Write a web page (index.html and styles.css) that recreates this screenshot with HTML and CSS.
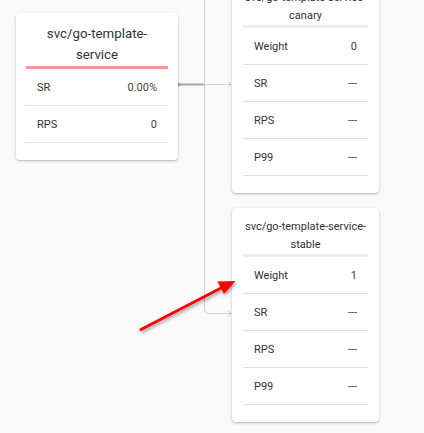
FILE: index.html
```html
<!DOCTYPE html>
<html>
<head>
<meta charset="utf-8">
<link rel="stylesheet" href="styles.css">
</head>
<body>
<div class="canvas">
  <svg class="edges" width="424" height="433" viewBox="0 0 424 433">
    <line x1="204.5" y1="0" x2="204.5" y2="309" stroke="#d0d0d0" stroke-width="1"/>
    <path d="M204.5 309 Q204.5 313.5 209 313.5 L231 313.5" fill="none" stroke="#d0d0d0" stroke-width="1"/>
    <path d="M228 310.5 L231 313.5 L228 316.5" fill="none" stroke="#c8c8c8" stroke-width="1"/>
    <line x1="204.5" y1="84.5" x2="231" y2="84.5" stroke="#d0d0d0" stroke-width="1"/>
    <path d="M228 81.5 L231 84.5 L228 87.5" fill="none" stroke="#c8c8c8" stroke-width="1"/>
    <line x1="178" y1="84.5" x2="204" y2="84.5" stroke="#a8a8a8" stroke-width="2"/>
    <circle cx="178.5" cy="84.5" r="2" fill="#a8a8a8"/>
  </svg>

  <div class="card card-src">
    <div class="title title-src">svc/go-template-service</div>
    <div class="bar bar-red"></div>
    <div class="row"><span>SR</span><span class="val">0.00%</span></div>
    <div class="row"><span>RPS</span><span class="val">0</span></div>
  </div>

  <div class="card card-canary">
    <div class="title">svc/go-template-service-canary</div>
    <div class="bar bar-gray"></div>
    <div class="row"><span>Weight</span><span class="val">0</span></div>
    <div class="row"><span>SR</span><span class="val">---</span></div>
    <div class="row"><span>RPS</span><span class="val">---</span></div>
    <div class="row"><span>P99</span><span class="val">---</span></div>
  </div>

  <div class="card card-stable">
    <div class="title">svc/go-template-service-stable</div>
    <div class="bar bar-gray"></div>
    <div class="row"><span>Weight</span><span class="val">1</span></div>
    <div class="row"><span>SR</span><span class="val">---</span></div>
    <div class="row"><span>RPS</span><span class="val">---</span></div>
    <div class="row"><span>P99</span><span class="val">---</span></div>
  </div>

  <svg class="arrow" width="424" height="433" viewBox="0 0 424 433">
    <defs>
      <filter id="sh" x="-20%" y="-20%" width="140%" height="140%">
        <feDropShadow dx="1.5" dy="2" stdDeviation="1.5" flood-color="#000" flood-opacity="0.35"/>
      </filter>
    </defs>
    <g filter="url(#sh)">
      <line x1="141" y1="329.5" x2="222" y2="287.5" stroke="#ff0000" stroke-width="3" stroke-linecap="round"/>
      <polygon points="235.5,281 224,294 217.5,281.5" fill="#ff0000"/>
    </g>
  </svg>
</div>
</body>
</html>
```
FILE: styles.css
```css
html, body {
  margin: 0;
  padding: 0;
  background: #fafafa;
}
.canvas {
  position: relative;
  width: 424px;
  height: 433px;
  overflow: hidden;
  background: #fafafa;
  font-family: Roboto, "Liberation Sans", sans-serif;
  color: #333;
}
.edges, .arrow {
  position: absolute;
  left: 0;
  top: 0;
}
.arrow {
  pointer-events: none;
}
.card {
  position: absolute;
  background: #fff;
  border-radius: 4px;
  box-shadow: 0 1px 3px rgba(0,0,0,0.22), 0 1px 1px rgba(0,0,0,0.08);
  box-sizing: border-box;
  display: flex;
  flex-direction: column;
  padding: 10px 11px 17px;
}
.card-src {
  left: 16px;
  top: 13px;
  width: 162px;
  padding: 10px 10px 17px;
}
.card-canary {
  left: 232px;
  top: -21px;
  width: 147px;
}
.card-stable {
  left: 232px;
  top: 208px;
  width: 147px;
}
.title {
  text-align: center;
  font-size: 11px;
  line-height: 18px;
  color: #333;
}
.title-src {
  font-size: 13.3px;
  line-height: 21px;
  margin-bottom: 1px;
}
.bar {
  height: 3px;
  flex: none;
}
.bar-red {
  background: #ef9a9a;
}
.bar-gray {
  background: #eeeeee;
}
.row {
  height: 36px;
  border-bottom: 1px solid #e0e0e0;
  display: flex;
  align-items: center;
  justify-content: space-between;
  padding: 0 11px;
  font-size: 11px;
  color: #333;
}
.val {
  color: #444;
}
```
